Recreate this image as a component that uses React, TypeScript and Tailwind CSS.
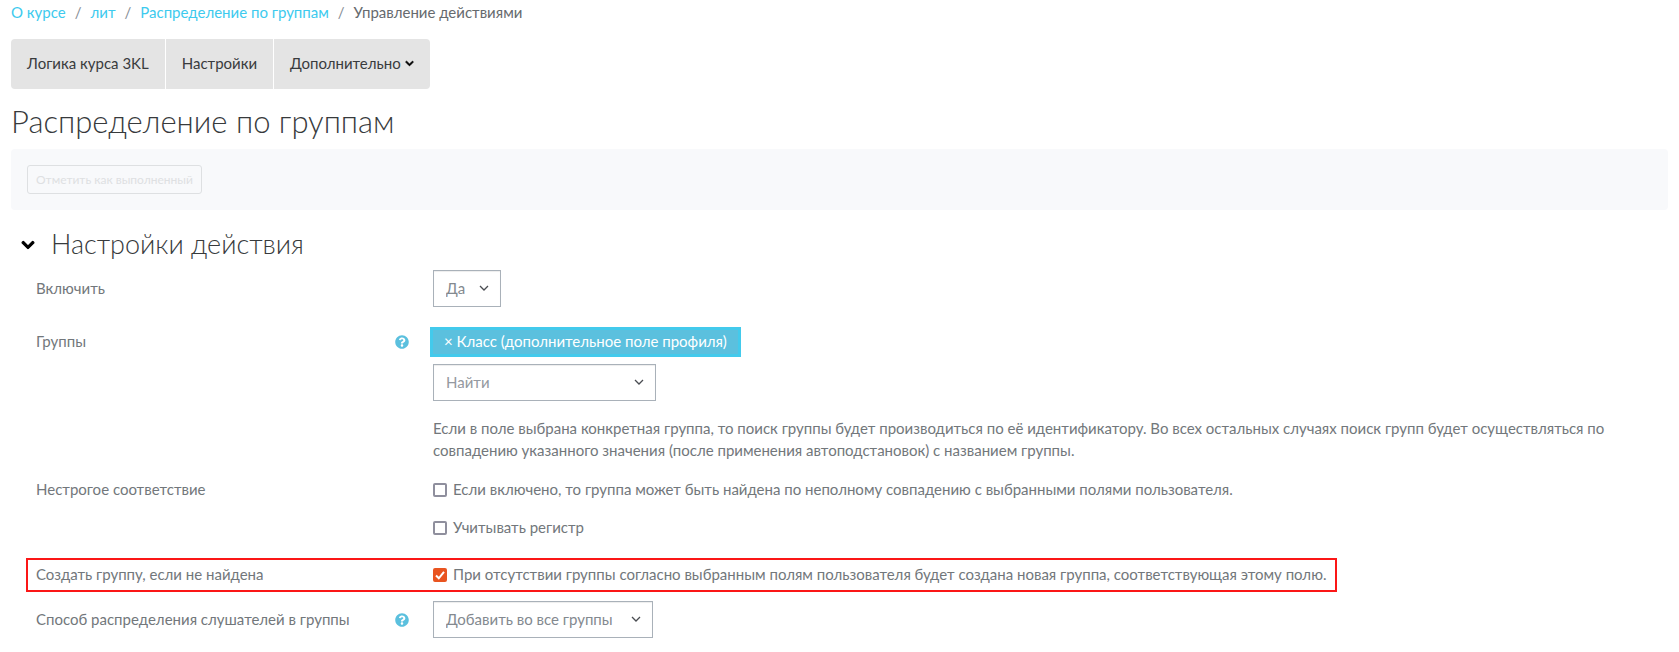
import type { ReactNode } from 'react'
import { FaChevronDown, FaQuestionCircle } from 'react-icons/fa'

const crumbs = ['О курсе', 'лит', 'Распределение по группам']

function Breadcrumbs() {
  return (
    <nav aria-label="Навигация">
      <ol className="flex h-6 items-center">
        {crumbs.map((name) => (
          <li key={name} className="flex">
            <a href="#" className="text-[#3dcaee]">
              {name}
            </a>
            <span className="px-[9px] text-[#868e96]">/</span>
          </li>
        ))}
        <li className="text-[#666a6e]">Управление действиями</li>
      </ol>
    </nav>
  )
}

function Help() {
  return (
    <button type="button" aria-label="Справка" className="mr-6 h-[14px] text-[#5bc0de]">
      <FaQuestionCircle size={14} />
    </button>
  )
}

// thin arrow drawn over selects and the search box
function Arrow() {
  return (
    <svg
      viewBox="0 0 10 10"
      className="pointer-events-none absolute top-[13px] right-3 h-[10px] w-[10px] fill-none stroke-[#4a4d52]"
      strokeWidth="1.3"
    >
      <path d="M1 3 5 7 9 3" />
    </svg>
  )
}

function Row({
  label,
  htmlFor,
  help,
  children,
}: {
  label: string
  htmlFor: string
  help?: boolean
  children: ReactNode
}) {
  return (
    <div className="flex items-start">
      <div className="flex h-[37px] w-1/4 shrink-0 items-center justify-between">
        <label htmlFor={htmlFor} className="pb-px">
          {label}
        </label>
        {help && <Help />}
      </div>
      <div className="min-w-0 flex-1">{children}</div>
    </div>
  )
}

function Select({ id, value, className }: { id: string; value: string; className: string }) {
  return (
    <div className={`relative ${className}`}>
      <select
        id={id}
        className="block h-[37px] w-full appearance-none border border-[#a9b1b9] bg-white pb-px pl-3 text-[#83898f] shadow-[inset_0_1px_1px_rgba(0,0,0,0.075)]"
      >
        <option>{value}</option>
      </select>
      <Arrow />
    </div>
  )
}

function Check({ id, checked, children }: { id: string; checked?: boolean; children: ReactNode }) {
  return (
    <div className="flex h-[37px] items-center gap-[6px]">
      <span className="relative h-[14px] w-[14px] shrink-0">
        <input
          id={id}
          type="checkbox"
          defaultChecked={checked}
          className="peer block h-[14px] w-[14px] appearance-none rounded-[2px] border-2 border-[#8f8f9d] bg-white checked:border-[#e95420] checked:bg-[#e95420]"
        />
        <svg
          viewBox="0 0 14 14"
          className="pointer-events-none absolute inset-0 hidden fill-none stroke-white stroke-2 peer-checked:block"
        >
          <path d="M3 7.5 5.8 10.3 11 3.8" />
        </svg>
      </span>
      <label htmlFor={id} className="pb-px">
        {children}
      </label>
    </div>
  )
}

export default function App() {
  return (
    <main className="bg-white px-[11px] font-['Lato','Open_Sans',sans-serif] text-[15px] leading-[22px] text-[#72777b]">
      <Breadcrumbs />

      <nav className="mt-[15px] flex h-[50px] w-fit gap-px overflow-hidden rounded text-[#393b3d]">
        <a href="#" className="flex items-center bg-[#e4e4e4] px-4 pb-[2px]">
          Логика курса 3KL
        </a>
        <a href="#" className="flex items-center bg-[#e4e4e4] px-4 pb-[2px]">
          Настройки
        </a>
        <button type="button" className="flex items-center gap-1 bg-[#e4e4e4] px-4 pb-[2px]">
          Дополнительно
          <FaChevronDown size={9} className="stroke-black stroke-[40] text-black" />
        </button>
      </nav>

      <h1 className="mt-[14px] text-[31px] leading-[36px] font-light text-[#373a3c]">
        Распределение по группам
      </h1>

      <div className="mt-[10px] rounded bg-[#f8f9fb] p-4">
        <button
          type="button"
          disabled
          className="block h-[29px] rounded-[3px] border border-[#dee0e2] px-2 text-[12px] leading-[18px] text-[#dee0e2]"
        >
          Отметить как выполненный
        </button>
      </div>

      <section>
        <h2 className="mt-[18px] flex h-8 items-center gap-4 pl-[10px] text-[27px] leading-8 font-light text-[#373a3c]">
          <FaChevronDown size={14} className="mt-[2px] overflow-visible stroke-black stroke-[40] text-black" />
          Настройки действия
        </h2>

        <form className="mt-[10px] pr-11 pl-[25px]">
          <Row label="Включить" htmlFor="enable">
            <Select id="enable" value="Да" className="w-[68px]" />
          </Row>

          <div className="mt-4">
            <Row label="Группы" htmlFor="groups" help>
              <button
                type="button"
                className="mt-1 -ml-[3px] block h-[30px] border-3 border-[#43caec] bg-[#5bc0de] px-[11px] pb-[2px] leading-[22px] text-white"
              >
                × Класс (дополнительное поле профиля)
              </button>
              <div className="relative mt-[7px] w-[223px]">
                <input
                  id="groups"
                  placeholder="Найти"
                  className="block h-[37px] w-full border border-[#a9b1b9] pb-px pl-3 shadow-[inset_0_1px_1px_rgba(0,0,0,0.075)] placeholder:text-[#9499a0]"
                />
                <Arrow />
              </div>
              <p className="mt-4">
                Если в поле выбрана конкретная группа, то поиск группы будет производиться по её
                идентификатору. Во всех остальных случаях поиск групп будет осуществляться по
                совпадению указанного значения (после применения автоподстановок) с названием
                группы.
              </p>
            </Row>
          </div>

          <div className="mt-[10px]">
            <Row label="Нестрогое соответствие" htmlFor="loose">
              <div className="grid gap-px">
                <Check id="loose">
                  Если включено, то группа может быть найдена по неполному совпадению с выбранными
                  полями пользователя.
                </Check>
                <Check id="case">Учитывать регистр</Check>
              </div>
            </Row>
          </div>

          <div className="relative mt-[10px]">
            <Row label="Создать группу, если не найдена" htmlFor="create">
              <Check id="create" checked>
                При отсутствии группы согласно выбранным полям пользователя будет создана новая
                группа, соответствующая этому полю.
              </Check>
            </Row>
            <div className="pointer-events-none absolute top-[2px] right-[287px] bottom-px -left-[10px] border-2 border-[#fb1717]" />
          </div>

          <div className="mt-2">
            <Row label="Способ распределения слушателей в группы" htmlFor="method" help>
              <Select id="method" value="Добавить во все группы" className="w-[220px]" />
            </Row>
          </div>
        </form>
      </section>
    </main>
  )
}
